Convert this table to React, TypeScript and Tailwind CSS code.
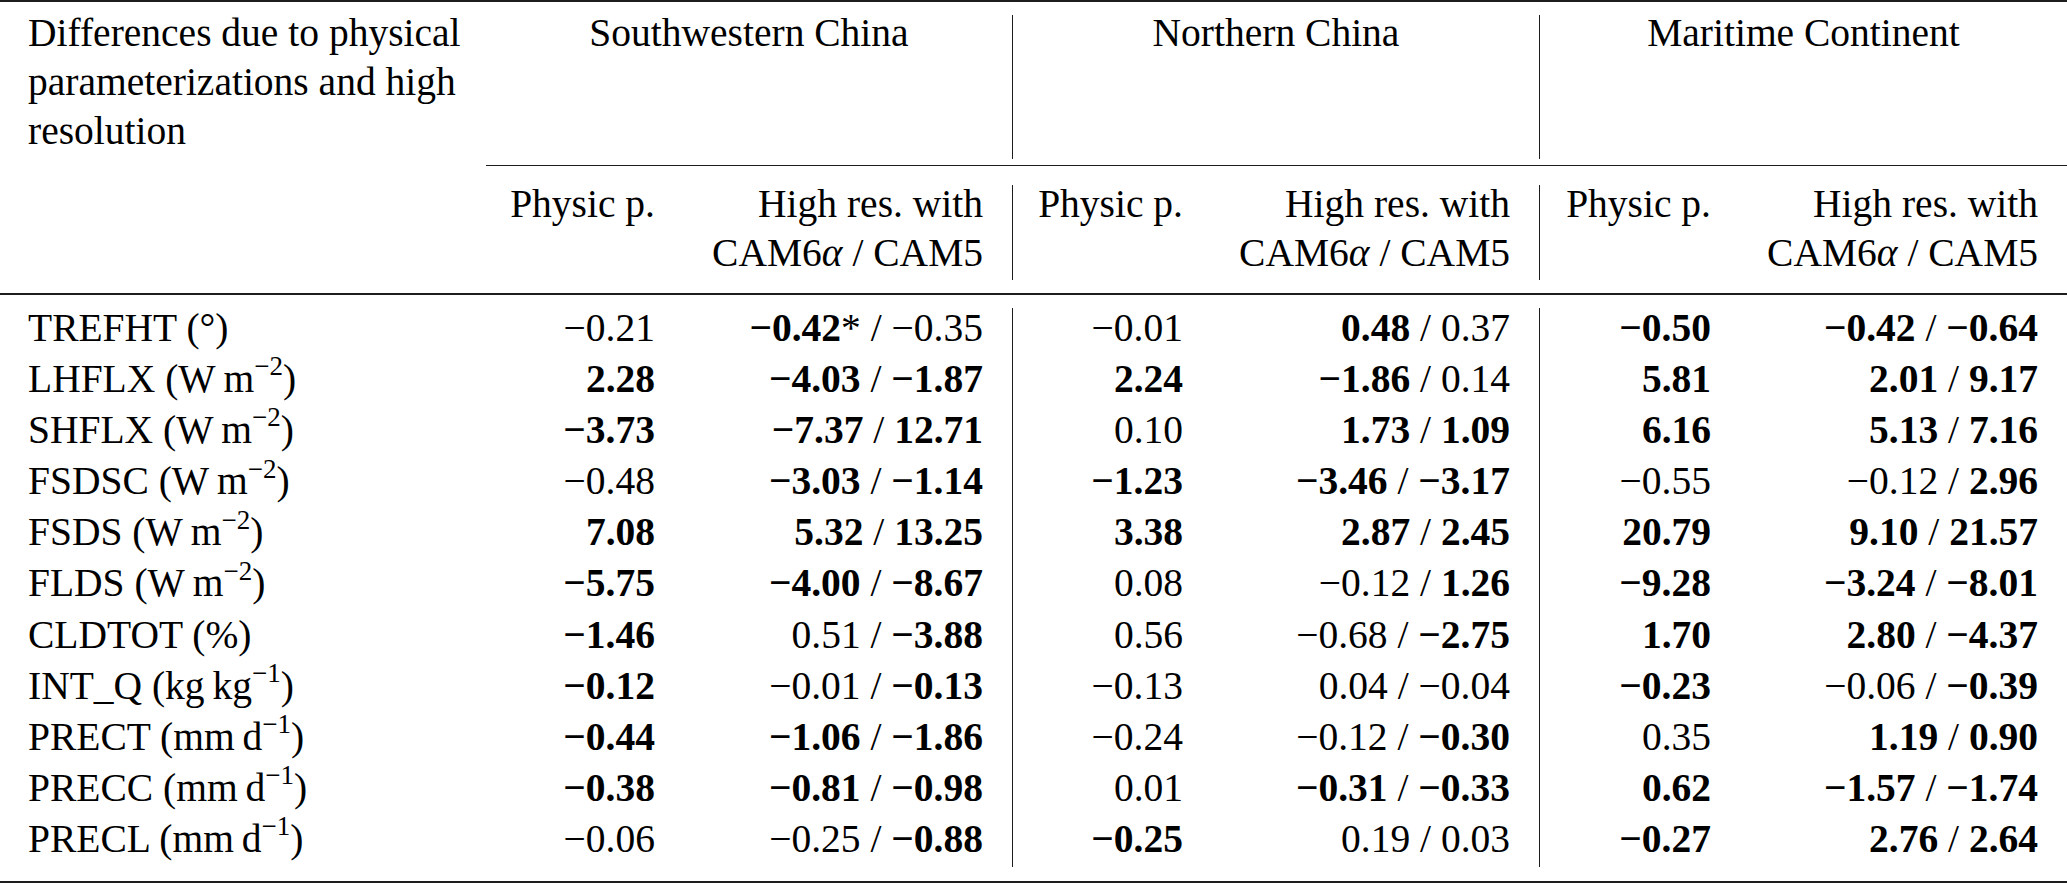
import { Fragment } from "react";
import type { ReactNode } from "react";

function Sup({ children }: { children: ReactNode }) {
  return <sup className="top-[-0.62em] text-[27px]">{children}</sup>;
}

const thin = "\u2009";

const labels: ReactNode[] = [
  <>TREFHT (°)</>,
  <>LHFLX (W{thin}m<Sup>−2</Sup>)</>,
  <>SHFLX (W{thin}m<Sup>−2</Sup>)</>,
  <>FSDSC (W{thin}m<Sup>−2</Sup>)</>,
  <>FSDS (W{thin}m<Sup>−2</Sup>)</>,
  <>FLDS (W{thin}m<Sup>−2</Sup>)</>,
  <>CLDTOT (%)</>,
  <>INT_Q (kg{thin}kg<Sup>−1</Sup>)</>,
  <>PRECT (mm{thin}d<Sup>−1</Sup>)</>,
  <>PRECC (mm{thin}d<Sup>−1</Sup>)</>,
  <>PRECL (mm{thin}d<Sup>−1</Sup>)</>,
];

// "!" marks a bold value
const rows: string[][] = [
  ["−0.21", "!−0.42* / −0.35", "−0.01", "!0.48 / 0.37", "!−0.50", "!−0.42 / !−0.64"],
  ["!2.28", "!−4.03 / !−1.87", "!2.24", "!−1.86 / 0.14", "!5.81", "!2.01 / !9.17"],
  ["!−3.73", "!−7.37 / !12.71", "0.10", "!1.73 / !1.09", "!6.16", "!5.13 / !7.16"],
  ["−0.48", "!−3.03 / !−1.14", "!−1.23", "!−3.46 / !−3.17", "−0.55", "−0.12 / !2.96"],
  ["!7.08", "!5.32 / !13.25", "!3.38", "!2.87 / !2.45", "!20.79", "!9.10 / !21.57"],
  ["!−5.75", "!−4.00 / !−8.67", "0.08", "−0.12 / !1.26", "!−9.28", "!−3.24 / !−8.01"],
  ["!−1.46", "0.51 / !−3.88", "0.56", "−0.68 / !−2.75", "!1.70", "!2.80 / !−4.37"],
  ["!−0.12", "−0.01 / !−0.13", "−0.13", "0.04 / −0.04", "!−0.23", "−0.06 / !−0.39"],
  ["!−0.44", "!−1.06 / !−1.86", "−0.24", "−0.12 / !−0.30", "0.35", "!1.19 / !0.90"],
  ["!−0.38", "!−0.81 / !−0.98", "0.01", "!−0.31 / !−0.33", "!0.62", "!−1.57 / !−1.74"],
  ["−0.06", "−0.25 / !−0.88", "!−0.25", "0.19 / 0.03", "!−0.27", "!2.76 / !2.64"],
];

function Value({ text }: { text: string }) {
  return (
    <>
      {text.split(" / ").map((part, i) => {
        const bold = part.startsWith("!");
        let v = bold ? part.slice(1) : part;
        const star = v.endsWith("*");
        if (star) v = v.slice(0, -1);
        return (
          <Fragment key={i}>
            {i > 0 && " / "}
            <span className={bold ? "font-bold" : ""}>{v}</span>
            {star && "*"}
          </Fragment>
        );
      })}
    </>
  );
}

const colClasses = [
  "w-[195px] pr-[26px]",
  "w-[331px] pr-[29px]",
  "w-[196px] pr-[26px]",
  "w-[330px] pr-[29px]",
  "w-[197px] pr-[26px]",
  "w-[330px] pr-[29px]",
];

function Sep({ cls }: { cls: string }) {
  return <div className={`w-px shrink-0 bg-[#1d1d1d] ${cls}`} />;
}

function HighRes() {
  return (
    <>
      High res. with
      <br />
      CAM6<i>α</i> / CAM5
    </>
  );
}

export default function App() {
  return (
    <div className="w-[2067px] h-[883px] bg-white text-black font-['Liberation_Serif'] text-[39.5px]">
      <div className="h-[2px] bg-[#1d1d1d]" />

      {/* header */}
      <div className="flex h-[291px]">
        <div className="w-[486px] shrink-0 pl-[28px] pt-[7px] leading-[49px]">
          <div className="w-[445px]">
            Differences due to physical parameterizations and high resolution
          </div>
        </div>
        <div className="flex flex-1 flex-col">
          <div className="flex h-[163px]">
            <div className="w-[526px] pt-[7px] text-center leading-[49px]">Southwestern China</div>
            <Sep cls="mt-[13px] mb-[6px]" />
            <div className="w-[526px] pt-[7px] text-center leading-[49px]">Northern China</div>
            <Sep cls="mt-[13px] mb-[6px]" />
            <div className="w-[527px] pt-[7px] text-center leading-[49px]">Maritime Continent</div>
          </div>
          <div className="h-px bg-[#1d1d1d]" />
          <div className="flex h-[127px] text-right leading-[49px]">
            <div className={`${colClasses[0]} pt-[14px]`}>Physic p.</div>
            <div className={`${colClasses[1]} pt-[14px]`}>
              <HighRes />
            </div>
            <Sep cls="mt-[19px] mb-[13px]" />
            <div className={`${colClasses[2]} pt-[14px]`}>Physic p.</div>
            <div className={`${colClasses[3]} pt-[14px]`}>
              <HighRes />
            </div>
            <Sep cls="mt-[19px] mb-[13px]" />
            <div className={`${colClasses[4]} pt-[14px]`}>Physic p.</div>
            <div className={`${colClasses[5]} pt-[14px]`}>
              <HighRes />
            </div>
          </div>
        </div>
      </div>

      <div className="h-[2px] bg-[#1d1d1d]" />

      {/* data */}
      <div className="flex h-[586px] leading-[51.1px]">
        <div className="w-[486px] shrink-0 pl-[28px] pt-[8px]">
          {labels.map((l, i) => (
            <div key={i}>{l}</div>
          ))}
        </div>
        {[0, 1, 2, 3, 4, 5].map((c) => (
          <Fragment key={c}>
            {(c === 2 || c === 4) && <Sep cls="mt-[13px] mb-[14px]" />}
            <div className={`${colClasses[c]} shrink-0 pt-[8px] text-right`}>
              {rows.map((r, i) => (
                <div key={i}>
                  <Value text={r[c]} />
                </div>
              ))}
            </div>
          </Fragment>
        ))}
      </div>

      <div className="h-[2px] bg-[#1d1d1d]" />
    </div>
  );
}
